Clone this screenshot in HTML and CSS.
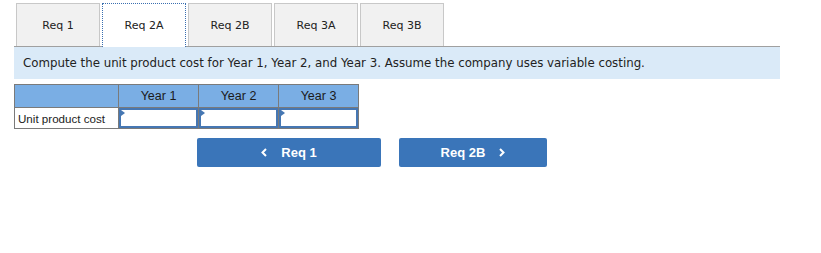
FILE: index.html
```html
<!DOCTYPE html>
<html lang="en">
  <head>
    <meta charset="UTF-8" />
    <title>Variable costing</title>
    <link rel="stylesheet" href="styles.css">
  </head>
  <body>
    <div class="page">
      <ul class="tabs">
        <li class="tab">Req 1</li>
        <li class="tab active">Req 2A</li>
        <li class="tab">Req 2B</li>
        <li class="tab">Req 3A</li>
        <li class="tab">Req 3B</li>
      </ul>

      <div class="question">
        Compute the unit product cost for Year 1, Year 2, and Year 3. Assume the company uses variable costing.
      </div>

      <table class="answer">
        <thead>
          <tr>
            <th class="label-col"></th>
            <th>Year 1</th>
            <th>Year 2</th>
            <th>Year 3</th>
          </tr>
        </thead>
        <tbody>
          <tr>
            <td class="label-col">Unit product cost</td>
            <td class="input-cell"><span class="marker"></span></td>
            <td class="input-cell"><span class="marker"></span></td>
            <td class="input-cell"><span class="marker"></span></td>
          </tr>
        </tbody>
      </table>

      <div class="nav-buttons">
        <button class="nav-btn prev">
          <svg class="chev" width="6" height="9" viewBox="0 0 6 9"><path d="M5 1 L1.5 4.5 L5 8" fill="none" stroke="#fff" stroke-width="2"/></svg>
          Req 1
        </button>
        <button class="nav-btn next">
          Req 2B
          <svg class="chev" width="6" height="9" viewBox="0 0 6 9"><path d="M1 1 L4.5 4.5 L1 8" fill="none" stroke="#fff" stroke-width="2"/></svg>
        </button>
      </div>
    </div>
  </body>
</html>
```

FILE: styles.css
```css
body {
  margin: 0;
  background-color: #ffffff;
  color: #222;
}

.page {
  padding: 3px 0 0 14px;
  width: 766px;
}

/* tabs */
.tabs {
  list-style-type: none;
  margin: 0;
  padding: 0 0 0 2px;
  display: flex;
  gap: 2px;
  border-bottom: 1px solid #a0a0a0;
  height: 43px;
}

.tab {
  box-sizing: border-box;
  width: 84px;
  height: 43px;
  background-color: #f1f1f1;
  border: 1px solid #c8c8c8;
  border-bottom: none;
  display: flex;
  align-items: center;
  justify-content: center;
  font-family: "DejaVu Sans", Verdana, sans-serif;
  font-size: 11px;
  color: #222;
}

.tab.active {
  background-color: #ffffff;
  border: 1px dotted #3a6fb0;
  border-bottom: none;
  height: 44px;
  position: relative;
  z-index: 1;
}

.question {
  background-color: #daeaf8;
  height: 32px;
  display: flex;
  align-items: center;
  padding-left: 9px;
  font-family: "DejaVu Sans", Verdana, sans-serif;
  font-size: 11.8px;
  color: #222;
}

/* answer table */
.answer {
  border-collapse: collapse;
  margin-top: 5px;
  font-family: "Liberation Sans", Arial, sans-serif;
  font-size: 12px;
}

.answer th {
  background-color: #7aaee4;
  border: 1px solid #7a7a7a;
  width: 79px;
  height: 22px;
  padding: 0;
  font-weight: normal;
  font-size: 12.5px;
  color: #1a1a1a;
}

.answer th.label-col {
  width: 103px;
}

.answer td {
  border: 1px solid #7a7a7a;
  height: 20px;
  padding: 0;
}

.answer td.label-col {
  padding-left: 3px;
  font-size: 11.6px;
  color: #222;
  white-space: nowrap;
}

.input-cell {
  box-shadow: inset 0 0 0 2px #4677b3;
  position: relative;
}

.marker {
  position: absolute;
  top: 2px;
  left: 2px;
  width: 0;
  height: 0;
  border-top: 3px solid transparent;
  border-bottom: 3px solid transparent;
  border-left: 4px solid #4677b3;
}

/* prev / next */
.nav-buttons {
  display: flex;
  gap: 18px;
  margin: 9px 0 0 183px;
}

.nav-btn {
  height: 29px;
  border: none;
  border-radius: 2px;
  background-color: #3a75b9;
  color: #ffffff;
  font-family: "Liberation Sans", Arial, sans-serif;
  font-weight: bold;
  font-size: 13px;
  padding: 0;
  display: flex;
  align-items: center;
  justify-content: center;
  gap: 14px;
}

.nav-btn.prev {
  width: 184px;
}

.nav-btn.next {
  width: 148px;
}
```
